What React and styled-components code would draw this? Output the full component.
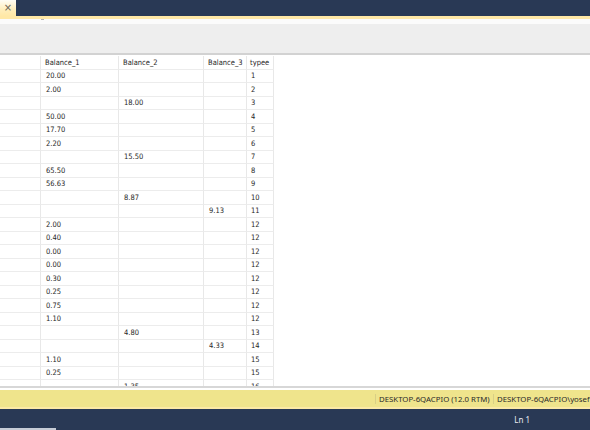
import React from "react";
import styled, { createGlobalStyle } from "styled-components";

const Global = createGlobalStyle`
  html, body { margin: 0; padding: 0; background: #ffffff; }
  body { width: 590px; height: 430px; overflow: hidden; }
  #root { width: 590px; height: 430px; }
`;

const Page = styled.div`
  width: 590px;
  height: 430px;
  display: flex;
  flex-direction: column;
  background: #ffffff;
  overflow: hidden;
`;

const TabStrip = styled.div`
  height: 16px;
  flex: none;
  background: #293955;
  display: flex;
  align-items: stretch;
`;

const Tab = styled.div`
  width: 16px;
  background: linear-gradient(#fffdf6, #ffeebb 60%, #ffe8a6);
  display: flex;
  align-items: center;
  justify-content: center;
  color: #6b6353;
  font-family: "DejaVu Sans", sans-serif;
  font-size: 10px;
  line-height: 1;
`;

const TabLine = styled.div`
  height: 3px;
  flex: none;
  background: #ffe8a6;
`;

const Spacer = styled.div`
  height: 5px;
  flex: none;
  background: #fbfbfb;
  position: relative;
`;

const Grip = styled.div`
  position: absolute;
  left: 41px;
  top: 0;
  width: 3px;
  height: 1px;
  background: #b4b4b4;
`;

const Toolbar = styled.div`
  height: 29px;
  flex: none;
  background: #eeeeee;
  border-bottom: 2px solid #d2d2d2;
`;

const GridPane = styled.div`
  flex: 1;
  min-height: 0;
  overflow: hidden;
  padding-top: 1px;
  border-bottom: 2px solid #d7d7d7;
`;

const Grid = styled.div`
  display: grid;
  grid-template-columns: 41px 78px 85px 43px 27px;
  grid-auto-rows: 13.5px;
  width: 274px;
  font-family: "DejaVu Sans Condensed", "DejaVu Sans", sans-serif;
  font-size: 7.5px;
  color: #262626;
`;

const Cell = styled.div`
  border-right: 1px solid #e8e8e8;
  border-bottom: 1px solid #ececec;
  padding-left: ${(p) => p.$pad}px;
  display: flex;
  align-items: center;
  white-space: nowrap;
  overflow: hidden;
  box-sizing: border-box;
`;

const Status = styled.div`
  height: 17px;
  margin-top: 2px;
  flex: none;
  background: #efe48c;
  border-bottom: 2px solid #fbe9a6;
  display: flex;
  align-items: center;
  justify-content: flex-end;
  font-family: "Noto Sans", sans-serif;
  font-size: 7.8px;
  color: #2a2a2a;
  white-space: nowrap;
`;

const StatusItem = styled.div`
  flex: none;
  border-left: 1px solid #d9cf86;
  padding-left: 3px;
  width: ${(p) => p.$w}px;
  overflow: hidden;
`;

const Bottom = styled.div`
  height: 21px;
  flex: none;
  background: #293955;
  position: relative;
  display: flex;
  justify-content: flex-end;
  align-items: center;
  padding-right: 60px;
  font-family: "Noto Sans", sans-serif;
  font-size: 8px;
  color: #e8ecf2;
`;

const Tray = styled.div`
  position: absolute;
  left: 0;
  bottom: 0;
  width: 56px;
  height: 2px;
  background: #c6ccd6;
`;

const rows = [
  ["20.00", "", "", "1"],
  ["2.00", "", "", "2"],
  ["", "18.00", "", "3"],
  ["50.00", "", "", "4"],
  ["17.70", "", "", "5"],
  ["2.20", "", "", "6"],
  ["", "15.50", "", "7"],
  ["65.50", "", "", "8"],
  ["56.63", "", "", "9"],
  ["", "8.87", "", "10"],
  ["", "", "9.13", "11"],
  ["2.00", "", "", "12"],
  ["0.40", "", "", "12"],
  ["0.00", "", "", "12"],
  ["0.00", "", "", "12"],
  ["0.30", "", "", "12"],
  ["0.25", "", "", "12"],
  ["0.75", "", "", "12"],
  ["1.10", "", "", "12"],
  ["", "4.80", "", "13"],
  ["", "", "4.33", "14"],
  ["1.10", "", "", "15"],
  ["0.25", "", "", "15"],
  ["", "1.35", "", "16"],
];

export default function App() {
  return (
    <Page>
      <Global />
      <TabStrip>
        <Tab>×</Tab>
      </TabStrip>
      <TabLine />
      <Spacer>
        <Grip />
      </Spacer>
      <Toolbar />
      <GridPane>
        <Grid>
          <Cell $pad={4}></Cell>
          <Cell $pad={4}>Balance_1</Cell>
          <Cell $pad={4}>Balance_2</Cell>
          <Cell $pad={4}>Balance_3</Cell>
          <Cell $pad={3}>typee</Cell>
          {rows.map((r, i) => (
            <React.Fragment key={i}>
              <Cell $pad={4}></Cell>
              <Cell $pad={5}>{r[0]}</Cell>
              <Cell $pad={5}>{r[1]}</Cell>
              <Cell $pad={5}>{r[2]}</Cell>
              <Cell $pad={4}>{r[3]}</Cell>
            </React.Fragment>
          ))}
        </Grid>
      </GridPane>
      <Status>
        <StatusItem $w={114}>DESKTOP-6QACPIO (12.0 RTM)</StatusItem>
        <StatusItem $w={93}>DESKTOP-6QACPIO\yosef</StatusItem>
      </Status>
      <Bottom>
        Ln 1
        <Tray />
      </Bottom>
    </Page>
  );
}
